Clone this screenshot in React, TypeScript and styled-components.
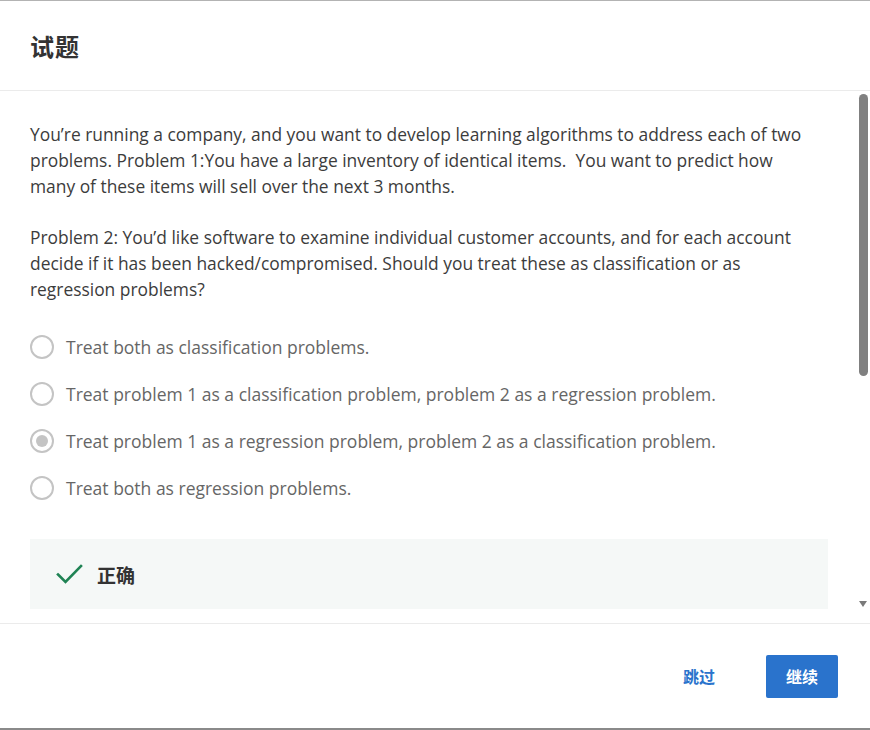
import React from "react";
import styled, { createGlobalStyle } from "styled-components";

const GlobalStyle = createGlobalStyle`
  html, body { margin: 0; padding: 0; background: #ffffff; }
  body { font-family: "Open Sans", "Noto Sans CJK SC", sans-serif; }
  * { box-sizing: border-box; }
`;

const Dialog = styled.div`
  width: 870px;
  height: 730px;
  display: flex;
  flex-direction: column;
  border-top: 1px solid #b3b3b3;
  border-bottom: 2px solid #8a8a8a;
  background: #fff;
`;

const Header = styled.header`
  height: 90px;
  flex: none;
  display: flex;
  align-items: center;
  padding: 0 30px;
  border-bottom: 1px solid #ebebeb;
`;

const Title = styled.h1`
  margin: 0;
  font-family: "Noto Sans CJK SC", "Open Sans", sans-serif;
  font-size: 24px;
  font-weight: 700;
  color: #333;
  letter-spacing: 1px;
`;

const BodyFrame = styled.div`
  flex: 1;
  position: relative;
  min-height: 0;
`;

const Body = styled.div`
  height: 100%;
  overflow: hidden;
  padding: 30px 42px 0 30px;
`;

const ScrollThumb = styled.div`
  position: absolute;
  top: 3px;
  right: 2px;
  width: 9px;
  height: 282px;
  border-radius: 5px;
  background: #808080;
`;

const ScrollArrow = styled.div`
  position: absolute;
  top: 510px;
  right: 3px;
  width: 0;
  height: 0;
  border-left: 4px solid transparent;
  border-right: 4px solid transparent;
  border-top: 6px solid #7a7a7a;
`;

const Prompt = styled.div`
  display: flex;
  flex-direction: column;
  gap: 25px;
  padding-right: 12px;
`;

const Paragraph = styled.p`
  margin: 0;
  font-size: 17.4px;
  line-height: 26px;
  color: #3c3c3c;
`;

const Options = styled.div`
  display: flex;
  flex-direction: column;
  margin-top: 21px;
`;

const Option = styled.label`
  height: 47px;
  display: flex;
  align-items: center;
  gap: 12px;
  font-size: 17.5px;
  color: #666;
  cursor: pointer;
`;

const Radio = styled.span<{ $checked?: boolean }>`
  width: 24px;
  height: 24px;
  flex: none;
  border-radius: 50%;
  border: 2px solid #c4c4c4;
  display: flex;
  align-items: center;
  justify-content: center;
  &::after {
    content: "";
    width: 12px;
    height: 12px;
    border-radius: 50%;
    background: ${(p) => (p.$checked ? "#c4c4c4" : "transparent")};
  }
`;

const Feedback = styled.div`
  margin-top: 28px;
  height: 70px;
  background: #f5f8f7;
  display: flex;
  align-items: center;
  gap: 13px;
  padding-left: 26px;
`;

const FeedbackText = styled.span`
  font-family: "Noto Sans CJK SC", sans-serif;
  font-size: 19px;
  font-weight: 700;
  color: #333;
`;

const Footer = styled.footer`
  height: 105px;
  flex: none;
  border-top: 1px solid #ebebeb;
  display: flex;
  align-items: center;
  justify-content: flex-end;
  padding: 0 32px 0 0;
  gap: 51px;
`;

const SkipLink = styled.button`
  border: none;
  background: none;
  padding: 0;
  font-family: "Noto Sans CJK SC", sans-serif;
  font-size: 16px;
  font-weight: 700;
  color: #2a73cc;
  cursor: pointer;
`;

const PrimaryButton = styled.button`
  width: 72px;
  height: 43px;
  border: none;
  border-radius: 2px;
  background: #2a73cc;
  color: #fff;
  font-family: "Noto Sans CJK SC", sans-serif;
  font-size: 16px;
  font-weight: 700;
  cursor: pointer;
`;

const options = [
  "Treat both as classification problems.",
  "Treat problem 1 as a classification problem, problem 2 as a regression problem.",
  "Treat problem 1 as a regression problem, problem 2 as a classification problem.",
  "Treat both as regression problems.",
];

export default function App() {
  return (
    <>
      <GlobalStyle />
      <Dialog>
        <Header>
          <Title>试题</Title>
        </Header>
        <BodyFrame>
          <Body>
            <Prompt>
              <Paragraph>
                You’re running a company, and you want to develop learning algorithms to address each of two
                problems. Problem 1:You have a large inventory of identical items.&nbsp; You want to predict how
                many of these items will sell over the next 3 months.
              </Paragraph>
              <Paragraph>
                Problem 2: You’d like software to examine individual customer accounts, and for each account
                decide if it has been hacked/compromised. Should you treat these as classification or as
                regression problems?
              </Paragraph>
            </Prompt>
            <Options>
              {options.map((o, i) => (
                <Option key={i}>
                  <Radio $checked={i === 2} />
                  <span>{o}</span>
                </Option>
              ))}
            </Options>
            <Feedback>
              <svg width="28" height="24" viewBox="0 0 28 24" fill="none">
                <path d="M2 12.5 L9.5 20 L25 4" stroke="#1f8354" strokeWidth="2.6" strokeLinecap="square" />
              </svg>
              <FeedbackText>正确</FeedbackText>
            </Feedback>
          </Body>
          <ScrollThumb />
          <ScrollArrow />
        </BodyFrame>
        <Footer>
          <SkipLink>跳过</SkipLink>
          <PrimaryButton>继续</PrimaryButton>
        </Footer>
      </Dialog>
    </>
  );
}
